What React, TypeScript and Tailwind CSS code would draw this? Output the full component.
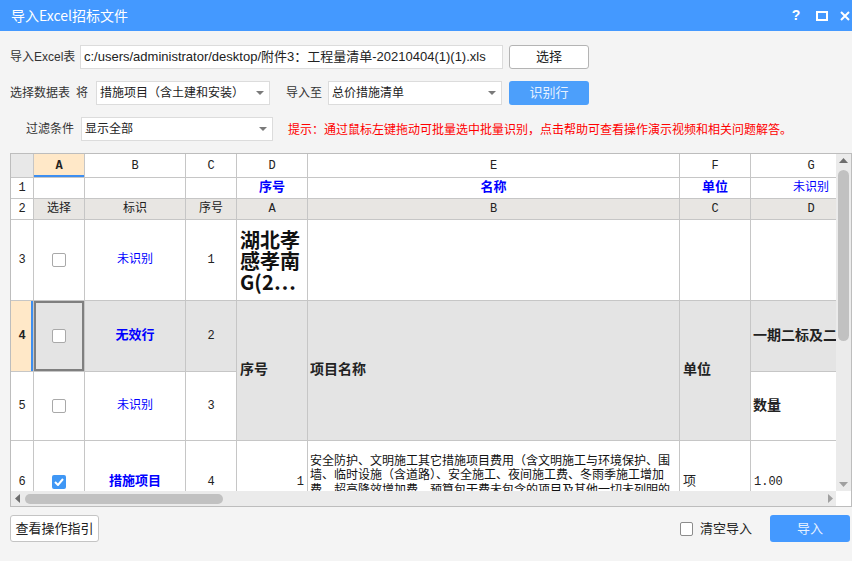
import React from "react";

const sheetFont = "font-['Liberation_Mono','Noto_Sans_CJK_SC',monospace]";

function Check({ on = false }: { on?: boolean }) {
	if (on) {
		return (
			<span className="w-[14px] h-[14px] rounded-[2px] bg-[#3f97f5] flex items-center justify-center">
				<svg width="10" height="8" viewBox="0 0 10 8">
					<path d="M1 4 L4 7 L9 1" fill="none" stroke="#fff" strokeWidth="2" />
				</svg>
			</span>
		);
	}
	return <span className="w-[14px] h-[14px] rounded-[2px] border border-[#a9a9a9] bg-white" />;
}

function Caret() {
	return (
		<svg width="8" height="4" viewBox="0 0 8 4" className="shrink-0">
			<path d="M0 0 L8 0 L4 4 Z" fill="#7a7a7a" />
		</svg>
	);
}

function Select({ value, w }: { value: string; w: string }) {
	return (
		<div className={`${w} h-[24px] border border-[#dcdcdc] bg-white flex items-center justify-between pl-[3px] pr-[5px] text-[12px] text-[#222]`}>
			<span>{value}</span>
			<Caret />
		</div>
	);
}

// base cell, colour given per cell
const cell = "bg-white flex items-center justify-center text-[12px]";
const dark = "text-[#222]";
const blue = "text-[#0000ff]";
const gray2 = "bg-[#e8e6e3] flex items-center justify-center text-[12px] text-[#222]";
const gray4 = "bg-[#e4e4e4] flex items-center text-[14px] font-bold text-[#222]";

function Sheet() {
	return (
		<div className={`grid w-max gap-px bg-[#c6c6c6] grid-cols-[22px_50px_100px_50px_70px_371px_70px_120px] grid-rows-[23px_20px_20px_80px_70px_68px_81px] ${sheetFont}`}>
			{/* header */}
			<div className="bg-[#e8e8e8]" />
			<div className="bg-[#ffe8c8] flex items-center justify-center text-[12px] font-bold text-[#222] shadow-[inset_0_-2px_0_#3d8ef0]">A</div>
			<div className={`${cell} ${dark}`}>B</div>
			<div className={`${cell} ${dark}`}>C</div>
			<div className={`${cell} ${dark}`}>D</div>
			<div className={`${cell} ${dark}`}>E</div>
			<div className={`${cell} ${dark}`}>F</div>
			<div className={`${cell} ${dark}`}>G</div>

			{/* row 1 */}
			<div className={`${cell} ${dark}`}>1</div>
			<div className={cell} />
			<div className={cell} />
			<div className={cell} />
			<div className={`${cell} ${blue} text-[13px] font-bold`}>序号</div>
			<div className={`${cell} ${blue} text-[13px] font-bold`}>名称</div>
			<div className={`${cell} ${blue} text-[13px] font-bold`}>单位</div>
			<div className={`${cell} ${blue}`}>未识别</div>

			{/* row 2 */}
			<div className={`${cell} ${dark}`}>2</div>
			<div className={gray2}>选择</div>
			<div className={gray2}>标识</div>
			<div className={gray2}>序号</div>
			<div className={gray2}>A</div>
			<div className={gray2}>B</div>
			<div className={gray2}>C</div>
			<div className={gray2}>D</div>

			{/* row 3 */}
			<div className={`${cell} ${dark}`}>3</div>
			<div className={cell}>
				<Check />
			</div>
			<div className={`${cell} ${blue}`}>未识别</div>
			<div className={`${cell} ${dark}`}>1</div>
			<div className="bg-white px-[3px] flex items-center text-[20px] leading-[21px] font-bold text-[#111] overflow-hidden">
				<span className="font-['Noto_Sans_CJK_SC',sans-serif] w-[64px] break-all">湖北孝感孝南G(2…</span>
			</div>
			<div className={cell} />
			<div className={cell} />
			<div className={cell} />

			{/* row 4 */}
			<div className="bg-[#ffe8c8] flex items-center justify-center text-[12px] font-bold text-[#222] shadow-[inset_-2px_0_0_#3d8ef0]">4</div>
			<div className="bg-[#e4e4e4] flex items-center justify-center shadow-[inset_0_0_0_2px_#7f7f7f]">
				<Check />
			</div>
			<div className={`bg-[#e4e4e4] flex items-center justify-center text-[13px] font-bold ${blue}`}>无效行</div>
			<div className="bg-[#e4e4e4] flex items-center justify-center text-[12px] text-[#222]">2</div>
			<div className={`${gray4} row-span-2 pl-[3px]`}>序号</div>
			<div className={`${gray4} row-span-2 pl-[2px]`}>项目名称</div>
			<div className={`${gray4} row-span-2 pl-[3px]`}>单位</div>
			<div className={`${gray4} pl-[2px] whitespace-nowrap overflow-hidden`}>一期二标及二期</div>

			{/* row 5 */}
			<div className={`${cell} ${dark}`}>5</div>
			<div className={cell}>
				<Check />
			</div>
			<div className={`${cell} ${blue}`}>未识别</div>
			<div className={`${cell} ${dark}`}>3</div>
			<div className="bg-white flex items-center pl-[2px] text-[14px] font-bold text-[#222]">数量</div>

			{/* row 6 */}
			<div className={`${cell} ${dark}`}>6</div>
			<div className={cell}>
				<Check on />
			</div>
			<div className={`${cell} ${blue} text-[13px] font-bold`}>措施项目</div>
			<div className={`${cell} ${dark}`}>4</div>
			<div className="bg-white flex items-center justify-end pr-[3px] text-[12px] text-[#222]">1</div>
			<div className="bg-white flex items-center pl-[2px] pr-[3px] text-[12px] leading-[14.5px] text-[#111] overflow-hidden">
				<span className="font-['Noto_Sans_CJK_SC',sans-serif]">
					安全防护、文明施工其它措施项目费用（含文明施工与环境保护、围墙、临时设施（含道路）、安全施工、夜间施工费、冬雨季施工增加费、超高降效增加费、预算包干费未包含的项目及其他一切未列明的项目）
				</span>
			</div>
			<div className="bg-white flex items-center pl-[3px] text-[13px] text-[#222]">项</div>
			<div className="bg-white flex items-center pl-[3px] text-[12px] text-[#222]">1.00</div>
		</div>
	);
}

export default function App() {
	return (
		<div className="w-[852px] h-[561px] bg-[#f4f4f4] overflow-hidden font-['Liberation_Sans','Noto_Sans_CJK_SC',sans-serif] text-[#222]">
			{/* title bar */}
			<div className="h-[31px] bg-[#4499ff] flex items-center justify-between pl-[11px] pr-[2px] text-white">
				<span className="text-[14px] font-['Noto_Sans_CJK_SC',sans-serif]">导入Excel招标文件</span>
				<div className="flex items-center">
					<span className="w-[20px] text-center text-[14px] font-bold">?</span>
					<svg width="12" height="10" viewBox="0 0 12 10" className="ml-[10px]">
						<rect x="1" y="1" width="10" height="8" fill="none" stroke="#fff" strokeWidth="2" />
					</svg>
					<svg width="10" height="10" viewBox="0 0 10 10" className="ml-[12px]">
						<path d="M1 1 L9 9 M9 1 L1 9" stroke="#fff" strokeWidth="2" />
					</svg>
				</div>
			</div>

			<div className="pl-[10px]">
				{/* row 1 */}
				<div className="mt-[14px] h-[24px] flex items-center">
					<span className="w-[70px] text-[12px] text-[#333]">导入Excel表</span>
					<div className="w-[423px] h-[24px] border border-[#dcdcdc] bg-white flex items-center pl-[3px] text-[13px] whitespace-nowrap overflow-hidden">
						c:/users/administrator/desktop/附件3：工程量清单-20210404(1)(1).xls
					</div>
					<button className="ml-[6px] w-[80px] h-[24px] border border-[#b4b4b4] rounded-[3px] bg-white text-[13px]">选择</button>
				</div>

				{/* row 2 */}
				<div className="mt-[12px] h-[24px] flex items-center">
					<span className="w-[66px] text-[12px] text-[#333]">选择数据表</span>
					<span className="w-[20px] text-[12px] text-[#333]">将</span>
					<Select value="措施项目（含土建和安装）" w="w-[174px]" />
					<span className="ml-[16px] w-[42px] text-[12px] text-[#333]">导入至</span>
					<Select value="总价措施清单" w="w-[174px]" />
					<button className="ml-[7px] w-[80px] h-[24px] rounded-[3px] bg-[#4c9ffb] text-[13px] text-[#e6f1ff]">识别行</button>
				</div>

				{/* row 3 */}
				<div className="mt-[12px] h-[24px] flex items-center">
					<span className="w-[71px] pl-[16px] text-[12px] text-[#333]">过滤条件</span>
					<Select value="显示全部" w="w-[192px]" />
					<span className="ml-[15px] text-[12px] text-[#ff0000] font-['Noto_Sans_CJK_SC',sans-serif]">
						提示：通过鼠标左键拖动可批量选中批量识别，点击帮助可查看操作演示视频和相关问题解答。
					</span>
				</div>

				{/* sheet */}
				<div className="mt-[12px] w-[842px] h-[354px] border border-[#bdbdbd] flex flex-col">
					<div className="h-[337px] flex">
						<div className="w-[825px] h-[337px] overflow-hidden">
							<Sheet />
						</div>
						<div className="w-[15px] bg-[#ebebeb] flex flex-col items-center">
							<svg width="9" height="5" viewBox="0 0 9 5" className="mt-[4px]">
								<path d="M0 5 L4.5 0 L9 5 Z" fill="#6d6d6d" />
							</svg>
							<div className="mt-[7px] w-[11px] h-[171px] rounded-full bg-[#c1c1c1]" />
							<div className="flex-1" />
							<svg width="9" height="5" viewBox="0 0 9 5" className="mb-[4px]">
								<path d="M0 0 L9 0 L4.5 5 Z" fill="#a0a0a0" />
							</svg>
						</div>
					</div>
					<div className="h-[15px] flex">
						<div className="w-[825px] bg-[#ebebeb] flex items-center pl-[4px] pr-[3px]">
							<svg width="5" height="9" viewBox="0 0 5 9">
								<path d="M5 0 L0 4.5 L5 9 Z" fill="#6d6d6d" />
							</svg>
							<div className="ml-[5px] w-[198px] h-[10px] rounded-full bg-[#c1c1c1]" />
							<div className="flex-1" />
							<svg width="5" height="9" viewBox="0 0 5 9">
								<path d="M0 0 L5 4.5 L0 9 Z" fill="#a0a0a0" />
							</svg>
						</div>
						<div className="w-[15px] bg-white" />
					</div>
				</div>

				{/* bottom */}
				<div className="mt-[8px] h-[27px] flex items-center pr-[2px]">
					<button className="w-[89px] h-[27px] border border-[#c4c4c4] rounded-[3px] bg-white text-[13px]">查看操作指引</button>
					<div className="flex-1" />
					<span className="w-[13px] h-[14px] rounded-[2px] border border-[#8c8c8c] bg-white" />
					<span className="ml-[7px] text-[13px]">清空导入</span>
					<button className="ml-[18px] w-[80px] h-[27px] rounded-[3px] bg-[#4499ff] text-[13px] text-[#e6f1ff]">导入</button>
				</div>
			</div>
		</div>
	);
}
